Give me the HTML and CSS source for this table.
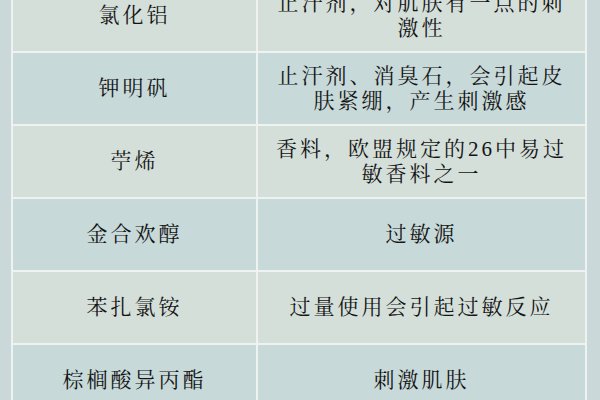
FILE: index.html
```html
<!DOCTYPE html>
<html lang="zh">
<head>
<meta charset="utf-8">
<link rel="stylesheet" href="styles.css">
</head>
<body>
<div class="page">
  <table class="grid">
    <colgroup><col class="c1"><col class="c2"></colgroup>
    <tr class="odd"><td>氯化铝</td><td>止汗剂，对肌肤有一点的刺激性</td></tr>
    <tr class="even"><td>钾明矾</td><td>止汗剂、消臭石，会引起皮肤紧绷，产生刺激感</td></tr>
    <tr class="odd"><td>苧烯</td><td>香料，欧盟规定的26中易过敏香料之一</td></tr>
    <tr class="even"><td>金合欢醇</td><td>过敏源</td></tr>
    <tr class="odd"><td>苯扎氯铵</td><td>过量使用会引起过敏反应</td></tr>
    <tr class="even"><td>棕榈酸异丙酯</td><td>刺激肌肤</td></tr>
  </table>
</div>
</body>
</html>
```
FILE: styles.css
```css
html, body {
  margin: 0;
  padding: 0;
  background: #cbd8d9;
  overflow: hidden;
  height: 400px;
}
.page {
  padding-left: 11px;
}
.grid {
  margin-top: -22px;
  width: 576px;
  border-collapse: collapse;
  table-layout: fixed;
  font-family: "Liberation Serif", "Noto Serif CJK SC", "Noto Sans CJK SC", serif;
  font-size: 21px;
  letter-spacing: 3px;
  color: #141414;
}
.c1 { width: 245px; }
.grid td {
  border: 2px solid #eef3f1;
  height: 71px;
  padding: 0 18px;
  text-align: center;
  vertical-align: middle;
  line-height: 25px;
}
.odd td { background: #d5dfda; }
.even td { background: #c7d9d9; }
```
